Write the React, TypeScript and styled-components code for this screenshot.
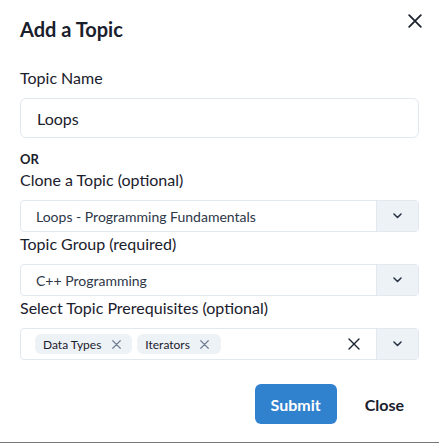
import React from 'react';
import styled, { createGlobalStyle } from 'styled-components';

const GlobalStyle = createGlobalStyle`
  body {
    margin: 0;
    font-family: Lato, "Open Sans", sans-serif;
    color: #1a202c;
    background: #ffffff;
  }
`;

const ChevronIcon = () => (
  <svg width="9" height="6" viewBox="0 0 9 6" fill="none">
    <path d="M1 1l3.5 3.5L8 1" stroke="#2d3748" strokeWidth="1.6" strokeLinecap="round" strokeLinejoin="round" />
  </svg>
);

const CrossIcon = ({ size, color, weight }: { size: number; color: string; weight: number }) => (
  <svg width={size} height={size} viewBox="0 0 12 12" fill="none">
    <path d="M1 1l10 10M11 1L1 11" stroke={color} strokeWidth={weight} strokeLinecap="round" />
  </svg>
);

type SelectProps = { value: string };

const SingleSelect = ({ value }: SelectProps) => (
  <SelectBox>
    <ValueArea>{value}</ValueArea>
    <Indicator><ChevronIcon /></Indicator>
  </SelectBox>
);

const prerequisites = ['Data Types', 'Iterators'];

const App = () => {
  return (
    <>
      <GlobalStyle />
      <Dialog>
        <Header>Add a Topic</Header>
        <CloseButton aria-label="Close">
          <CrossIcon size={14} color="#1a202c" weight={1.5} />
        </CloseButton>
        <Body>
          <Label>Topic Name</Label>
          <TextInput defaultValue="Loops" />
          <OrText>OR</OrText>
          <Label>Clone a Topic (optional)</Label>
          <SingleSelect value="Loops - Programming Fundamentals" />
          <Label>Topic Group (required)</Label>
          <SingleSelect value="C++ Programming" />
          <Label>Select Topic Prerequisites (optional)</Label>
          <SelectBox>
            <TagArea>
              {prerequisites.map((item) => (
                <Tag key={item}>
                  {item}
                  <TagRemove><CrossIcon size={9} color="#718096" weight={1.6} /></TagRemove>
                </Tag>
              ))}
            </TagArea>
            <ClearButton><CrossIcon size={12} color="#1a202c" weight={1.4} /></ClearButton>
            <Indicator><ChevronIcon /></Indicator>
          </SelectBox>
        </Body>
        <Footer>
          <SubmitButton>Submit</SubmitButton>
          <GhostButton>Close</GhostButton>
        </Footer>
      </Dialog>
    </>
  );
};

const Dialog = styled.div`
  position: relative;
  height: 443px;
  box-sizing: border-box;
  border-bottom: 1px solid #777777;
  display: flex;
  flex-direction: column;
`;

const Header = styled.h2`
  margin: 0;
  padding: 14px 20px 0;
  font-size: 20px;
  font-weight: 700;
  line-height: 30px;
`;

const CloseButton = styled.button`
  position: absolute;
  top: 9px;
  right: 12px;
  width: 24px;
  height: 24px;
  padding: 0;
  border: none;
  background: none;
  display: flex;
  align-items: center;
  justify-content: center;
`;

const Body = styled.div`
  padding: 22px 20px 8px;
  display: flex;
  flex-direction: column;
`;

const Label = styled.label`
  display: block;
  font-size: 16px;
  line-height: 24px;
  margin-bottom: 8px;
`;

const TextInput = styled.input`
  height: 40px;
  box-sizing: border-box;
  border: 1px solid #e2e8f0;
  border-radius: 6px;
  padding: 0 16px;
  font-family: inherit;
  font-size: 16px;
  color: #1a202c;
  outline: none;
`;

const OrText = styled.div`
  margin-top: 12px;
  font-size: 13px;
  font-weight: 700;
  line-height: 18px;
`;

const SelectBox = styled.div`
  display: flex;
  align-items: stretch;
  height: 32px;
  box-sizing: border-box;
  border: 1px solid #e2e8f0;
  border-radius: 4px;
  overflow: hidden;
`;

const ValueArea = styled.div`
  flex: 1;
  display: flex;
  align-items: center;
  padding-left: 15px;
  font-size: 14px;
  color: #2d3748;
`;

const TagArea = styled.div`
  flex: 1;
  display: flex;
  align-items: center;
  gap: 5px;
  padding-left: 14px;
`;

const Tag = styled.span`
  display: inline-flex;
  align-items: center;
  height: 20px;
  padding: 0 6px 0 8px;
  border-radius: 6px;
  background: #edf2f7;
  font-size: 12px;
  color: #1a202c;
`;

const TagRemove = styled.span`
  display: inline-flex;
  align-items: center;
  justify-content: center;
  width: 20px;
  height: 20px;
  margin-left: 5px;
`;

const ClearButton = styled.span`
  display: flex;
  align-items: center;
  justify-content: center;
  width: 28px;
  margin-right: 8px;
`;

const Indicator = styled.div`
  width: 41px;
  display: flex;
  align-items: center;
  justify-content: center;
  background: #edf2f7;
  border-left: 1px solid #e2e8f0;
`;

const Footer = styled.div`
  display: flex;
  justify-content: flex-end;
  gap: 12px;
  padding: 16px 19px 0;
`;

const SubmitButton = styled.button`
  height: 40px;
  padding: 0 16px;
  border: none;
  border-radius: 6px;
  background: #3182ce;
  color: #ffffff;
  font-family: inherit;
  font-size: 16px;
  font-weight: 700;
`;

const GhostButton = styled.button`
  height: 40px;
  padding: 0 16px;
  border: none;
  border-radius: 6px;
  background: transparent;
  color: #1a202c;
  font-family: inherit;
  font-size: 16px;
  font-weight: 700;
`;

export default App;
